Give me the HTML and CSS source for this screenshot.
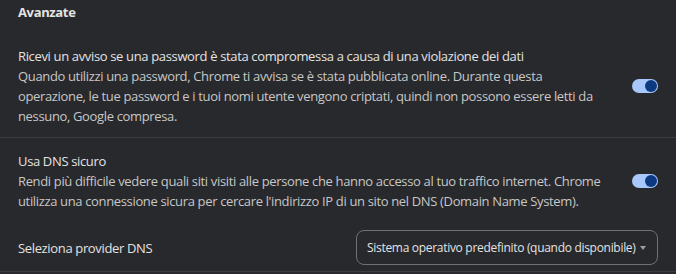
FILE: index.html
```html
<!DOCTYPE html>
<html lang="it">
<head>
<meta charset="utf-8">
<link rel="stylesheet" href="styles.css">
</head>
<body>
<div class="page">
  <div class="section-title">Avanzate</div>
  <div class="row row-first">
    <div class="text">
      <div class="label">Ricevi un avviso se una password è stata compromessa a causa di una violazione dei dati</div>
      <div class="sub">Quando utilizzi una password, Chrome ti avvisa se è stata pubblicata online. Durante questa<br>operazione, le tue password e i tuoi nomi utente vengono criptati, quindi non possono essere letti da<br>nessuno, Google compresa.</div>
    </div>
    <div class="toggle"><span class="knob"></span></div>
  </div>
  <div class="row row-dns">
    <div class="text">
      <div class="label">Usa DNS sicuro</div>
      <div class="sub">Rendi più difficile vedere quali siti visiti alle persone che hanno accesso al tuo traffico internet. Chrome<br>utilizza una connessione sicura per cercare l'indirizzo IP di un sito nel DNS (Domain Name System).</div>
    </div>
    <div class="toggle"><span class="knob"></span></div>
  </div>
  <div class="row-select">
    <div class="label">Seleziona provider DNS</div>
    <div class="select">
      <span class="select-text">Sistema operativo predefinito (quando disponibile)</span>
      <span class="arrow"></span>
    </div>
  </div>
</div>
</body>
</html>
```
FILE: styles.css
```css
html, body {
  margin: 0;
  padding: 0;
  background: #28292c;
}
body {
  font-family: "Open Sans", "Noto Sans", sans-serif;
  font-size: 13px;
  line-height: 20px;
  letter-spacing: -0.35px;
  color: #e3e3e3;
}
.page {
  width: 676px;
  height: 274px;
  overflow: hidden;
}
.section-title {
  font-weight: 700;
  padding: 2px 18px 0;
  height: 36px;
}
.row {
  display: flex;
  align-items: center;
  padding: 0 18px;
  gap: 16px;
}
.row-first {
  padding-top: 8px;
  padding-bottom: 11px;
  border-bottom: 1px solid #3c3d40;
}
.row-dns {
  padding-top: 13px;
  padding-bottom: 0;
}
.text {
  flex: 1;
  white-space: nowrap;
}
.sub {
  color: #c7c7c7;
}
.toggle {
  width: 26px;
  height: 14px;
  border-radius: 7px;
  background: #a8c7fa;
  display: flex;
  align-items: center;
  justify-content: flex-end;
  padding: 0 1px;
  box-sizing: border-box;
  flex-shrink: 0;
}
.knob {
  width: 12px;
  height: 12px;
  border-radius: 50%;
  background: #0b3a82;
}
.row-select {
  display: flex;
  align-items: center;
  justify-content: space-between;
  padding: 19px 18px 6px;
  border-bottom: 1px solid #3c3d40;
}
.select {
  width: 302px;
  height: 35px;
  box-sizing: border-box;
  border: 1px solid #6f7276;
  border-radius: 8px;
  display: flex;
  align-items: center;
  justify-content: space-between;
  padding: 0 11px 0 10px;
  color: #e3e3e3;
  white-space: nowrap;
}
.select-text {
  font-size: 12px;
  letter-spacing: -0.3px;
}
.arrow {
  width: 0;
  height: 0;
  border-left: 3.5px solid transparent;
  border-right: 3.5px solid transparent;
  border-top: 4px solid #9aa0a6;
}
```
